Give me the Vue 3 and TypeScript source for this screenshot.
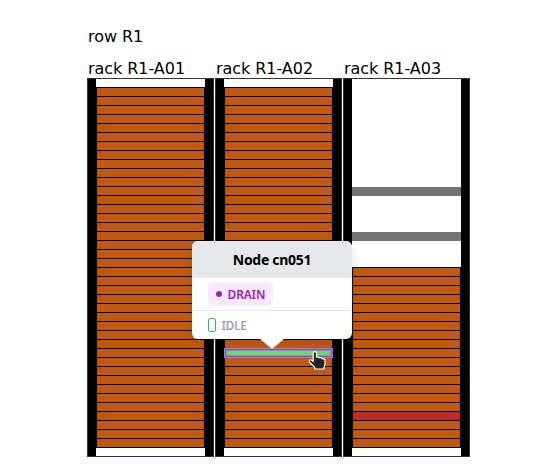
<script setup lang="ts">
type Status = 'allocated' | 'down' | 'idle' | 'empty' | 'blank'

interface Rack {
  name: string
  slots: Status[]
}

const fill = (count: number, status: Status): Status[] => Array<Status>(count).fill(status)

const racks: Rack[] = [
  { name: 'R1-A01', slots: fill(40, 'allocated') },
  { name: 'R1-A02', slots: [...fill(29, 'allocated'), 'idle', ...fill(10, 'allocated')] },
  {
    name: 'R1-A03',
    slots: [
      ...fill(11, 'empty'), 'blank', ...fill(4, 'empty'), 'blank', ...fill(3, 'empty'),
      ...fill(16, 'allocated'), 'down', ...fill(3, 'allocated'),
    ],
  },
]
</script>

<template>
  <main class="room">
    <h1 class="label row-label">row R1</h1>
    <div class="racks">
      <section v-for="rack in racks" :key="rack.name" class="rack">
        <h2 class="label">rack {{ rack.name }}</h2>
        <div class="frame">
          <div v-for="(slot, i) in rack.slots" :key="i" class="slot" :class="slot"></div>
        </div>
      </section>
    </div>

    <aside class="tooltip">
      <header class="title"><span>Node cn051</span></header>
      <div class="state">
        <span class="pill"><i class="dot"></i><span class="drain">DRAIN</span></span>
      </div>
      <div class="alloc"><i class="chip"></i><span class="idle-text">IDLE</span></div>
      <svg class="arrow" width="24" height="10" viewBox="0 0 24 10"><path d="M0 0H24L12 10Z" fill="#fff" /></svg>
    </aside>

    <svg class="pointer" width="18" height="19" viewBox="0 0 18 19">
      <path
        d="M5.2 2.2C5.2.2 8.5.2 8.5 2.2V6.3C9.4 5.7 11 5.8 11.3 6.8C12.2 6.3 13.6 6.6 13.9 7.7C15 7.4 17 8 17 9.4V13C17 14.5 16 15.6 16 16.5V18H6.7V16.2L2 11.6C.4 10 2 8.2 3.8 9.4L5.2 10.4Z"
        fill="#242424" stroke="#fff" stroke-width="1.2" stroke-linejoin="round"
      />
    </svg>
  </main>
</template>

<style>
body {
  background: #fff;
}
</style>

<style scoped>
.room {
  box-sizing: border-box;
  position: relative;
  width: 533px;
  height: 474px;
  padding: 27px 0 0 87px;
  overflow: hidden;
}
.label {
  margin: 0;
  padding-left: 1px;
  height: 20px;
  font: 400 16px/20px "DejaVu Sans", sans-serif;
  letter-spacing: -0.05px;
  color: #000;
  white-space: nowrap;
}
.row-label {
  margin-bottom: 12px;
}
.racks {
  display: flex;
  gap: 1px;
}
.rack {
  width: 127px;
}
.rack .label {
  height: 19px;
}
.frame {
  box-sizing: border-box;
  height: 379px;
  padding: 8px 0 8px;
  border: 1px solid #333;
  background: linear-gradient(90deg, #000 8px, #fff 8px 117px, #000 117px);
}
.slot {
  box-sizing: border-box;
  width: 109px;
  height: 9px;
  margin-left: 8px;
}
.allocated,
.down,
.idle {
  border: 1px solid #000;
  border-bottom: 0;
  background: #c05a12;
}
.slot:last-child {
  height: 10px;
  border-bottom: 1px solid #000;
}
.down {
  background: #b92c2c;
}
.blank {
  background: linear-gradient(#737373, #737373) 0 1px no-repeat;
  height: 10px;
  margin-bottom: -1px;
}
.idle {
  position: relative;
  border: 0;
  background: #000;
}
.idle::after {
  content: "";
  position: absolute;
  inset: 0 0 -1px;
  box-sizing: border-box;
  border: 2px solid #ac3fd0;
  outline: 1px solid #8689d8;
  outline-offset: -1px;
  background: #72d572;
  box-shadow: inset 0 0 0 1px rgb(172 63 208 / 40%);
}
.tooltip {
  position: absolute;
  left: 192px;
  top: 241px;
  width: 160px;
  height: 98px;
  border-radius: 6px;
  background: #fff;
  box-shadow: 0 4px 12px rgb(0 0 0 / 10%);
  font-family: "Noto Sans", sans-serif;
}
.title {
  display: flex;
  align-items: center;
  justify-content: center;
  height: 37px;
  border-radius: 6px 6px 0 0;
  background: #e5e7eb;
  font-size: 14px;
  font-weight: 700;
  letter-spacing: -0.3px;
  color: #000;
}
.state {
  box-sizing: border-box;
  height: 33px;
  padding: 4px 16px;
  border-bottom: 1px solid #e5e7eb;
}
.pill {
  box-sizing: border-box;
  display: flex;
  align-items: center;
  width: 65px;
  height: 24px;
  padding-left: 8px;
  gap: 5.5px;
  border-radius: 6px;
  background: #fae8ff;
  font-size: 12px;
  font-weight: 600;
  letter-spacing: -0.15px;
  color: #a21caf;
}
.dot {
  width: 6px;
  height: 6px;
  border-radius: 50%;
  background: #a21caf;
}
.alloc {
  display: flex;
  align-items: center;
  height: 28px;
  padding: 0 16px;
  gap: 5.5px;
  box-sizing: border-box;
  font-size: 12px;
  font-weight: 600;
  letter-spacing: -0.35px;
  color: #9ca3af;
}
.chip {
  box-sizing: border-box;
  width: 8px;
  height: 14px;
  border: 1px solid #22c55e;
  border-radius: 2px;
}
.arrow {
  position: absolute;
  left: 68px;
  top: 98px;
}
.pointer {
  position: absolute;
  left: 308px;
  top: 351px;
}
</style>
